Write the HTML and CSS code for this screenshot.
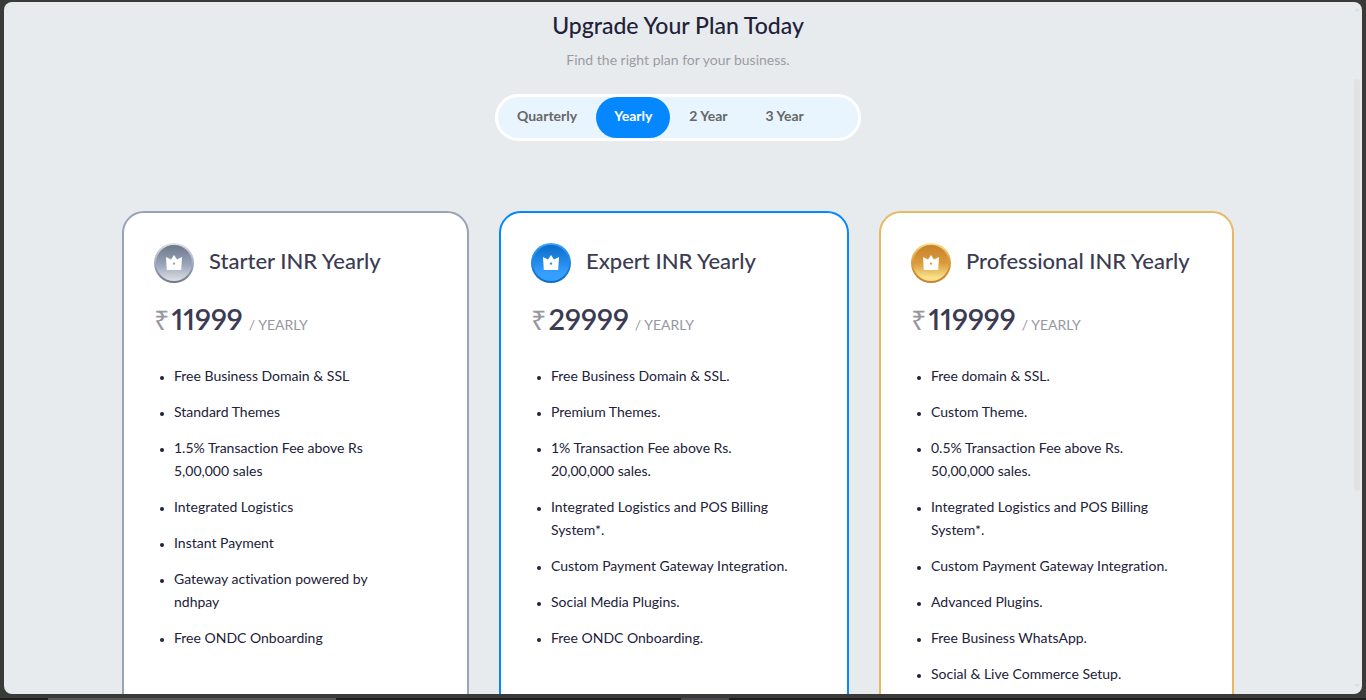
FILE: index.html
```html
<!DOCTYPE html>
<html lang="en">
<head>
<meta charset="utf-8">
<title>Upgrade Your Plan</title>
<link rel="stylesheet" href="styles.css">
</head>
<body>
<svg class="defs" aria-hidden="true">
  <symbol id="crown" viewBox="0 0 16 15"><path fill="#fff" fill-rule="evenodd" d="M0 2 5 4.6 8 0l3 4.6L16 2 15.2 15H.8ZM8 7.4a1.2 1.2 0 1 0 0 2.4 1.2 1.2 0 0 0 0-2.4Z"/></symbol>
</svg>
<main class="modal">
  <header class="intro">
    <h1 class="title">Upgrade Your Plan Today</h1>
    <p class="subtitle">Find the right plan for your business.</p>
    <div class="periods">
      <button class="period" type="button">Quarterly</button>
      <button class="period active" type="button" aria-pressed="true">Yearly</button>
      <button class="period" type="button">2 Year</button>
      <button class="period" type="button">3 Year</button>
    </div>
  </header>
  <div class="plans">
    <section class="plan starter">
      <div class="plan-head"><span class="badge"><svg class="crown"><use href="#crown"/></svg></span><h2 class="name">Starter INR Yearly</h2></div>
      <p class="price"><span class="currency">₹</span><strong class="amount">11999</strong><span class="per">/ YEARLY</span></p>
      <ul class="features">
        <li>Free Business Domain &amp; SSL</li>
        <li>Standard Themes</li>
        <li>1.5% Transaction Fee above Rs 5,00,000 sales</li>
        <li>Integrated Logistics</li>
        <li>Instant Payment</li>
        <li>Gateway activation powered by ndhpay</li>
        <li>Free ONDC Onboarding</li>
      </ul>
    </section>
    <section class="plan expert">
      <div class="plan-head"><span class="badge"><svg class="crown"><use href="#crown"/></svg></span><h2 class="name">Expert INR Yearly</h2></div>
      <p class="price"><span class="currency">₹</span><strong class="amount">29999</strong><span class="per">/ YEARLY</span></p>
      <ul class="features">
        <li>Free Business Domain &amp; SSL.</li>
        <li>Premium Themes.</li>
        <li>1% Transaction Fee above Rs. 20,00,000 sales.</li>
        <li>Integrated Logistics and POS Billing System*.</li>
        <li>Custom Payment Gateway Integration.</li>
        <li>Social Media Plugins.</li>
        <li>Free ONDC Onboarding.</li>
      </ul>
    </section>
    <section class="plan professional">
      <div class="plan-head"><span class="badge"><svg class="crown"><use href="#crown"/></svg></span><h2 class="name">Professional INR Yearly</h2></div>
      <p class="price"><span class="currency">₹</span><strong class="amount">119999</strong><span class="per">/ YEARLY</span></p>
      <ul class="features">
        <li>Free domain &amp; SSL.</li>
        <li>Custom Theme.</li>
        <li>0.5% Transaction Fee above Rs. 50,00,000 sales.</li>
        <li>Integrated Logistics and POS Billing System*.</li>
        <li>Custom Payment Gateway Integration.</li>
        <li>Advanced Plugins.</li>
        <li>Free Business WhatsApp.</li>
        <li>Social &amp; Live Commerce Setup.</li>
      </ul>
    </section>
  </div>
  <div class="scrollbar" aria-hidden="true"><i class="arrow up"></i><i class="thumb"></i><i class="arrow down"></i></div>
</main>
<footer class="taskbar"><i class="task wide"></i><i class="task"></i></footer>
</body>
</html>
```
FILE: styles.css
```css
* { box-sizing: border-box; }
body {
  margin: 0;
  height: 100vh;
  display: flex;
  flex-direction: column;
  overflow: hidden;
  background: #3a3a39;
  color: #212138;
  font-family: Lato, "Noto Sans", sans-serif;
  font-size: 14px;
  line-height: 23px;
  font-variant-ligatures: none;
}
h1, h2, p, ul { margin: 0; padding: 0; }
.defs { position: absolute; width: 0; height: 0; }
.modal {
  position: relative;
  flex: 1;
  min-height: 0;
  margin: 2px 4px 4px;
  padding: 7px 128px 0 118px;
  overflow: hidden;
  border-radius: 8px;
  background: #e7ebee;
}
.intro { display: flex; flex-direction: column; align-items: center; }
.title { font-size: 23px; line-height: 32px; font-weight: 500; }
.subtitle { margin-top: 7px; color: #9c9ca4; }
.periods {
  display: flex;
  width: 366px;
  margin-top: 23px;
  border: 3px solid #fff;
  border-radius: 24px;
  background: #e8f5ff;
}
.period {
  height: 41px;
  padding: 0 19px 4px;
  border: 0;
  border-radius: 21px;
  background: none;
  color: #666;
  font: bold 14px Lato, sans-serif;
}
.period.active { padding: 0 18px 4px; background: #0588ff; color: #fff; }
.plans {
  display: grid;
  grid-template-columns: 347fr 350fr 355fr;
  gap: 30px;
  margin-top: 70px;
}
.plan {
  padding: 30px 30px 120px;
  border: 2px solid;
  border-radius: 22px;
  background: #fff;
}
.starter { border-color: #99a3b7; }
.expert { border-color: #0588ff; }
.professional { border-color: #e8b964; }
.plan-head { display: flex; align-items: center; gap: 15px; }
.badge {
  display: flex;
  align-items: center;
  justify-content: center;
  width: 40px;
  height: 40px;
  padding-bottom: 1px;
  border: 2px solid transparent;
  border-radius: 50%;
}
.starter .badge { background: linear-gradient(#6c7789, #9aa5bb 55%, #e0e0e4) padding-box, linear-gradient(#e0e0e4, #a8b2c6 45%, #6c7789) border-box; }
.expert .badge { background: linear-gradient(#0a6cc8, #369fff 80%) padding-box, linear-gradient(#369fff, #0a6cc8) border-box; }
.professional .badge { background: linear-gradient(#c8822e, #d99a3b 50%, #f8e18a 90%) padding-box, linear-gradient(#f8e18a, #d99a3b 50%, #c8822e) border-box; }
.crown { width: 16px; height: 15px; }
.name { padding-bottom: 4px; color: #3b3b52; font-size: 22px; line-height: 36px; font-weight: 500; }
.price { display: flex; align-items: baseline; margin-top: 16px; color: #9797a1; line-height: 40px; }
.currency { font-size: 27px; font-family: "Noto Sans", sans-serif; }
.amount { margin-left: 2px; color: #3b3b52; font-size: 29px; font-weight: 600; font-variant-numeric: proportional-nums; }
.per { margin-left: 6px; }
.features { max-width: 262px; margin-top: 19px; padding-left: 20px; }
.features li { margin-bottom: 13px; }
.features li::marker { font-size: 11px; }
.scrollbar {
  position: absolute;
  top: 6px;
  right: 2px;
  bottom: 7px;
  width: 6px;
  display: grid;
  grid-template-rows: 3px 68fr 414fr 194fr 3px;
}
.thumb { grid-row: 3; border-radius: 3px; background: #e2e2e2; }
.arrow { border: 3px solid transparent; border-top: 0; border-bottom-color: #dcdfe1; }
.arrow.down { grid-row: 5; border: 3px solid transparent; border-bottom: 0; border-top-color: #dcdfe1; }
.taskbar { display: flex; gap: 345px; height: 2px; padding-left: 48px; background: #1e1d1e; }
.task { width: 48px; background: #4b494b; }
.task.wide { width: 288px; background: #5a595a; }
```
